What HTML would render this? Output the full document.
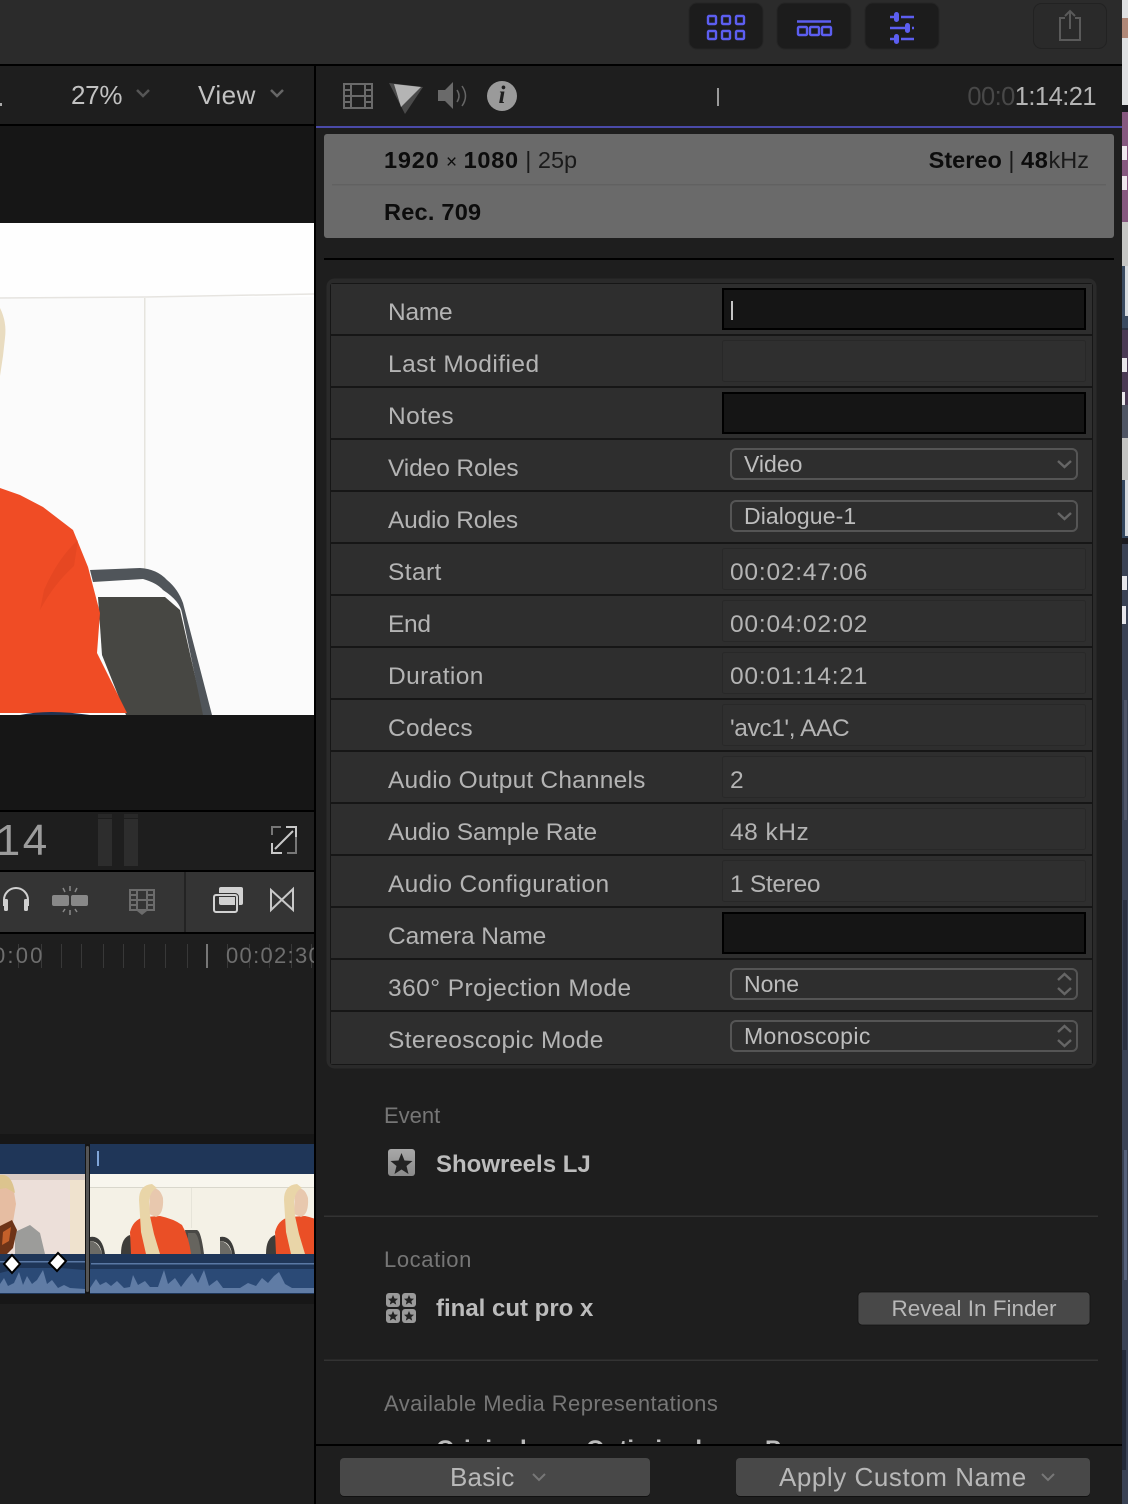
<!DOCTYPE html>
<html><head><meta charset="utf-8"><title>Final Cut Pro Inspector</title>
<style>
html,body{margin:0;padding:0;background:#1e1e1e}
#p{position:relative;width:1128px;height:1504px;overflow:hidden;background:#1e1e1e;font-family:"Liberation Sans",sans-serif}
svg.g{position:absolute;left:0;top:0}
.t{position:absolute;white-space:nowrap;color:#b4b4b4;font-size:24.5px;line-height:30px}
.l{left:388px}
.v{left:730px}
.d{left:744px;font-size:23px;color:#bdbdbd}
.b{font-weight:bold;color:#0c0c0c;font-size:23.5px}
.h{left:384px;font-size:22px;color:#767676}
.n{font-weight:bold;color:#bcbcbc;font-size:24px}
</style></head><body><div id="p">
<svg class="g" width="1128" height="1504" viewBox="0 0 1128 1504">
<defs>
<linearGradient id="star" x1="0" y1="0" x2="0" y2="1"><stop offset="0" stop-color="#a8a8a8"/><stop offset="1" stop-color="#8a8a8a"/></linearGradient>
<clipPath id="vid"><rect x="0" y="223" width="314" height="492"/></clipPath>
<clipPath id="c2"><rect x="90" y="1174" width="224" height="80"/></clipPath>
<clipPath id="c1"><rect x="0" y="1174" width="85" height="80"/></clipPath>
<g id="frame">
<rect x="90" y="1174" width="130" height="80" fill="#f4f1e6"/>
<rect x="90" y="1174" width="130" height="13" fill="#f8f6ee"/>
<rect x="90" y="1187" width="130" height="1" fill="#d9d7cc"/>
<path d="M90 1237q12-2 15 17h-3q-2-13-12-13z" fill="#3c3c3a"/><path d="M90 1241q9 1 12 13H90z" fill="#6c6b66"/>
</g>
<g id="woman">
<rect x="191" y="1188" width="1" height="40" fill="#e6e4d9"/>
<path d="M121 1254q0-16 9-19l4 19z" fill="#3e3d3a"/>
<path d="M185 1230h12q4 1 7 24h-16z" fill="#4a4946"/><path d="M188 1233h7q4 3 6 21h-13z" fill="#66645e"/>
<path d="M130 1232q3-12 14-15l16-1q14 3 22 9 7 12 9 29h-60z" fill="#ea4f26"/>
<path d="M150 1190q9-5 13 8 1 16-7 19l-7-3z" fill="#e8c8ae"/>
<path d="M139 1200q0-15 13-16l5 4q-7 3-8 14l1 14 4 18 6 20h-14l-5-22z" fill="#e9d5a8"/>
</g>
</defs>

<!-- desktop strip -->
<rect x="1122" y="0" width="6" height="1504" fill="#2c3344"/>
<rect x="1122" y="0" width="6" height="108" fill="#dfe0e2"/><rect x="1122" y="18" width="6" height="20" fill="#b08878"/><rect x="1122" y="105" width="6" height="7" fill="#1b1b20"/>
<rect x="1122" y="112" width="6" height="110" fill="#86587f"/><rect x="1122" y="146" width="5" height="14" fill="#f0e8ee"/><rect x="1122" y="176" width="5" height="14" fill="#efe6ec"/>
<rect x="1122" y="222" width="6" height="106" fill="#3a4a60"/><rect x="1122" y="222" width="6" height="44" fill="#c6c6c4"/><rect x="1125" y="266" width="3" height="50" fill="#d6dade"/>
<rect x="1122" y="330" width="6" height="108" fill="#4a3a54"/><rect x="1122" y="358" width="5" height="14" fill="#e8e6ea"/><rect x="1122" y="392" width="3" height="14" fill="#e8e6ea"/><rect x="1122" y="405" width="6" height="33" fill="#4f5564"/>
<rect x="1122" y="438" width="6" height="106" fill="#33465e"/><rect x="1122" y="438" width="6" height="42" fill="#c4c4c2"/><rect x="1125" y="480" width="3" height="56" fill="#d4d8dc"/><rect x="1122" y="538" width="6" height="6" fill="#1b1b20"/>
<rect x="1122" y="544" width="6" height="960" fill="#3a4254"/><rect x="1122" y="576" width="5" height="14" fill="#e6e6ea"/><rect x="1122" y="606" width="4" height="18" fill="#e6e6ea"/>
<rect x="1124" y="700" width="3" height="120" fill="#4f5568"/><rect x="1123" y="900" width="4" height="150" fill="#2a3040"/><rect x="1124" y="1150" width="3" height="130" fill="#55607a"/><rect x="1122" y="1350" width="4" height="120" fill="#232938"/>

<!-- top bar -->
<rect x="0" y="0" width="1122" height="64" fill="#2b2b2b"/>
<rect x="0" y="64" width="1122" height="2" fill="#000"/>
<rect x="689" y="3" width="74" height="46" rx="8" fill="#1c1c1c" stroke="#252525"/>
<rect x="777" y="3" width="74" height="46" rx="8" fill="#1c1c1c" stroke="#252525"/>
<rect x="865" y="3" width="74" height="46" rx="8" fill="#1c1c1c" stroke="#252525"/>
<rect x="1033.500" y="3.500" width="73" height="45" rx="8" fill="#2a2a2a" stroke="#222"/>
<g fill="none" stroke="#5c5ef0" stroke-width="2.400">
<rect x="708" y="16" width="8" height="8" rx="1"/><rect x="722" y="16" width="8" height="8" rx="1"/><rect x="736" y="16" width="8" height="8" rx="1"/>
<rect x="708" y="31" width="8" height="8" rx="1"/><rect x="722" y="31" width="8" height="8" rx="1"/><rect x="736" y="31" width="8" height="8" rx="1"/>
<path d="M797 21.500h34"/>
<rect x="798" y="27" width="9" height="8" rx="1"/><rect x="810" y="27" width="9" height="8" rx="1"/><rect x="822" y="27" width="9" height="8" rx="1"/>
<path d="M890 17h4M901 17h13M890 28h18M912 28h2M890 39h4M901 39h13"/>
</g>
<g fill="#5c5ef0"><rect x="894" y="12" width="5" height="10" rx="2.500"/><rect x="905" y="23" width="5" height="10" rx="2.500"/><rect x="894" y="34" width="5" height="10" rx="2.500"/></g>
<path d="M1065 18h-5v22h20V18h-5M1070 29V12M1065 16l5-5 5 5" fill="none" stroke="#5a5a5a" stroke-width="2"/>

<!-- viewer column -->
<rect x="0" y="66" width="314" height="58" fill="#1e1e1e"/>
<rect x="0" y="124" width="314" height="2" fill="#000"/>
<rect x="0" y="126" width="314" height="684" fill="#161616"/>
<rect x="314" y="64" width="2" height="1440" fill="#000"/>
<rect x="0" y="103" width="2" height="3" fill="#aaa"/>
<path d="M137 90l6 6 6-6" fill="none" stroke="#555" stroke-width="2.500"/>
<path d="M271 90l6 6 6-6" fill="none" stroke="#666" stroke-width="2.500"/>

<!-- video -->
<g clip-path="url(#vid)">
<rect x="0" y="223" width="314" height="492" fill="#fefefe"/>
<rect x="0" y="297" width="314" height="420" fill="#fbfbfb"/>
<path d="M0 298L145 297 314 294" stroke="#e6e4e0" stroke-width="1.500" fill="none"/>
<rect x="144" y="298" width="1.500" height="272" fill="#e6e4de"/>
<path d="M0 308q7 14 5 30l-2 18-3 20z" fill="#e9dcc0"/>
<path d="M98 597h67l15 13 24 105H126l-24-60z" fill="#474743"/>
<path d="M90 570l50-2q17 1 27 12 11 9 16 23l29 112h-9l-21-102q-2-12-19-23-6-7-20-11l-50 3z" fill="#50555a"/>
<path d="M0 488l20 7 23 12 30 23 15 37 12 46-3 40 30 60H0z" fill="#f04c25"/>
<path d="M78 540q-20 18-34 50l-4 20q14-26 34-44z" fill="#da421f" opacity=".45"/>
<path d="M20 715q28-6 70 0z" fill="#1f3250"/>
</g>
<rect x="0" y="810" width="314" height="2" fill="#000"/>

<!-- lower viewer bar -->
<rect x="0" y="812" width="314" height="58" fill="#1e1e1e"/>
<g fill="#2d2d2d"><rect x="98" y="819" width="14" height="47"/><rect x="124" y="819" width="14" height="47"/></g>
<g fill="#282828"><rect x="98" y="814" width="14" height="4"/><rect x="124" y="814" width="14" height="4"/></g>
<path d="M288 827h8v26h-9M279 853h-7v-8M272 835v-8h9" fill="none" stroke="#777" stroke-width="2"/>
<path d="M275 849l18-18M286 827h10v10M272 843v10h10" fill="none" stroke="#c8c8c8" stroke-width="2"/>

<!-- tools bar -->
<rect x="0" y="870" width="314" height="2" fill="#000"/>
<rect x="0" y="872" width="314" height="60" fill="#343434"/>
<rect x="0" y="932" width="314" height="2" fill="#000"/>
<rect x="184" y="872" width="2" height="60" fill="#232323"/>
<path d="M4 906v-6a12 12 0 0 1 24 0v6" fill="none" stroke="#d0d0d0" stroke-width="2"/>
<rect x="4" y="899" width="4" height="12" rx="1.500" fill="#d0d0d0"/><rect x="24" y="899" width="4" height="12" rx="1.500" fill="#d0d0d0"/>
<rect x="52" y="895" width="17" height="11" rx="2" fill="#888"/><rect x="71" y="895" width="17" height="11" rx="2" fill="#888"/>
<path d="M70 886v5M70 910v5M63 888l2 4M75 892l2-4M63 912l2-3M75 909l2 3" stroke="#888" stroke-width="1.500"/>
<g fill="none" stroke="#6c6c6c" stroke-width="2"><rect x="130" y="890" width="24" height="20"/><path d="M137 890v20M147 890v20M137 900h10M130 895h7M130 900h7M130 905h7M147 895h7M147 900h7M147 905h7"/></g>
<path d="M137 911h10l-5 4z" fill="#6c6c6c"/>
<rect x="219" y="887" width="24" height="18" rx="2" fill="#d2d2d2"/>
<rect x="214" y="895" width="23" height="17" rx="2" fill="none" stroke="#343434" stroke-width="4"/>
<rect x="214" y="895" width="23" height="17" rx="2" fill="none" stroke="#d2d2d2" stroke-width="2"/>
<path d="M271 890l22 20v-21l-22 21z" fill="none" stroke="#c8c8c8" stroke-width="2"/>

<!-- ruler -->
<rect x="0" y="934" width="314" height="200" fill="#1e1e1e"/>
<g fill="#383838">
<rect x="18" y="944" width="1" height="24"/><rect x="41" y="944" width="1" height="24"/><rect x="61" y="944" width="1" height="24"/><rect x="81" y="944" width="1" height="24"/><rect x="103" y="944" width="1" height="24"/><rect x="123" y="944" width="1" height="24"/><rect x="144" y="944" width="1" height="24"/><rect x="165" y="944" width="1" height="24"/><rect x="187" y="944" width="1" height="24"/><rect x="227" y="944" width="1" height="24"/><rect x="249" y="944" width="1" height="24"/><rect x="269" y="944" width="1" height="24"/><rect x="291" y="944" width="1" height="24"/><rect x="311" y="944" width="1" height="24"/>
</g>
<rect x="206" y="944" width="2" height="24" fill="#777"/>

<!-- timeline -->
<rect x="0" y="1134" width="314" height="10" fill="#171717"/>
<rect x="0" y="1294" width="314" height="10" fill="#171717"/>
<rect x="0" y="1144" width="314" height="150" fill="#141414"/>
<rect x="0" y="1144" width="85" height="150" fill="#1f3658"/>
<rect x="90" y="1144" width="224" height="150" fill="#1f3658"/>
<rect x="86" y="1146" width="3" height="146" rx="1.500" fill="#555"/>
<rect x="97" y="1151" width="2" height="15" fill="#7fa5d8"/>
<g clip-path="url(#c1)">
<rect x="0" y="1174" width="85" height="80" fill="#ecdfd9"/>
<rect x="0" y="1174" width="85" height="6" fill="#d8cbc4"/>
<rect x="70" y="1180" width="15" height="74" fill="#efe2ce"/>
<path d="M15 1232l15-7 10 8 5 21H15z" fill="#9c9c9a"/>
<path d="M0 1180q12-6 14 12l2 12-3 18-13 5z" fill="#e6bda2"/>
<path d="M0 1175q12-2 15 18l-9-5-6 1z" fill="#dcc48e"/>
<path d="M0 1226l12-6 5 10-4 18-6 6H0z" fill="#6e3418"/>
<path d="M3 1232l8-5-2 14-7 4z" fill="#c4602a"/>
</g>
<g clip-path="url(#c2)"><use href="#frame"/><use href="#woman"/><use href="#frame" x="130"/><use href="#woman" x="145"/></g>
<g fill="#2b4a76">
<path d="M0 1293v-20l20-5h40l25 2v23z"/>
<path d="M90 1293v-24h224v24z"/>
</g>
<rect x="0" y="1261" width="85" height="1.500" fill="#5a78a4"/>
<rect x="91" y="1263" width="223" height="1.500" fill="#5a78a4"/>
<path fill="#607ca5" d="M0 1293V1284L4 1278 8 1286 14 1283 19 1272 23 1285 27 1276 32 1284 37 1280 43 1270 47 1284 52 1280 58 1288 64 1285 70 1288 85 1289V1293Z"/>
<path fill="#607ca5" d="M90 1293V1288L96 1279 100 1285 106 1282 111 1286 117 1281 124 1288 130 1287 133 1275 138 1285 145 1281 150 1287 158 1287 164 1270 168 1284 175 1278 181 1287 187 1279 192 1273 198 1283 204 1270 209 1286 217 1280 223 1288 232 1288 240 1288 248 1283 256 1286 262 1278 268 1283 274 1276 279 1272 285 1284 292 1288 314 1288V1293Z"/>
<g stroke="#000" stroke-width="2" fill="#fff">
<path d="M12 1255l8 9-8 9-8-9z"/>
<path d="M58 1253l8 8-9 10-8-8z"/>
</g>

<!-- inspector tabs -->
<g fill="none" stroke="#6a6a6a" stroke-width="2"><rect x="344" y="84" width="28" height="24"/><path d="M351 84v24M365 84v24M351 96h14M344 90h7M344 96h7M344 102h7M365 90h7M365 96h7M365 102h7"/></g>
<path d="M389 83l34 4-18 27z" fill="#4a4a4a"/><path d="M394 84l27 3-20 20z" fill="#b4b4b4"/>
<path d="M438 90h7l8-8v27l-8-8h-7z" fill="#6a6a6a"/>
<path d="M457 90q4 6 0 12M462 86q7 10 0 20" fill="none" stroke="#666" stroke-width="1.500"/>
<circle cx="502" cy="96" r="15" fill="#9a9a9a"/>
<rect x="717" y="88" width="2" height="18" fill="#9a9a9a"/>
<rect x="316" y="126" width="806" height="2" fill="#4a4aa8"/>

<!-- info block -->
<rect x="324" y="134" width="790" height="104" rx="3" fill="#6a6a6a"/>
<rect x="332" y="184" width="774" height="1.500" fill="#616161"/>
<rect x="324" y="258" width="790" height="2" fill="#000"/>

<!-- property table -->
<rect x="326.500" y="278.500" width="770" height="790" rx="8" fill="#2a2a2a"/>
<rect x="330" y="283" width="763" height="782" rx="3" fill="#161616"/>
<g fill="#2e2e2e">
<rect x="331" y="284" width="761" height="50"/><rect x="331" y="336" width="761" height="50"/><rect x="331" y="388" width="761" height="50"/><rect x="331" y="440" width="761" height="50"/><rect x="331" y="492" width="761" height="50"/><rect x="331" y="544" width="761" height="50"/><rect x="331" y="596" width="761" height="50"/><rect x="331" y="648" width="761" height="50"/><rect x="331" y="700" width="761" height="50"/><rect x="331" y="752" width="761" height="50"/><rect x="331" y="804" width="761" height="50"/><rect x="331" y="856" width="761" height="50"/><rect x="331" y="908" width="761" height="50"/><rect x="331" y="960" width="761" height="50"/><rect x="331" y="1012" width="761" height="52"/>
</g>
<g fill="#151515" stroke="#000" stroke-width="2">
<rect x="723" y="289" width="362" height="40"/><rect x="723" y="393" width="362" height="40"/><rect x="723" y="913" width="362" height="40"/>
</g>
<g fill="#2f2f2f" stroke="#282828" stroke-width="1">
<rect x="722.500" y="340.500" width="363" height="41" rx="2"/><rect x="722.500" y="548.500" width="363" height="41" rx="2"/><rect x="722.500" y="600.500" width="363" height="41" rx="2"/><rect x="722.500" y="652.500" width="363" height="41" rx="2"/><rect x="722.500" y="704.500" width="363" height="41" rx="2"/><rect x="722.500" y="756.500" width="363" height="41" rx="2"/><rect x="722.500" y="808.500" width="363" height="41" rx="2"/><rect x="722.500" y="860.500" width="363" height="41" rx="2"/>
</g>
<rect x="731" y="301" width="2" height="19" fill="#c4c4c4"/>
<g fill="none" stroke="#555" stroke-width="2">
<rect x="731" y="449" width="346" height="30" rx="5"/><rect x="731" y="501" width="346" height="30" rx="5"/><rect x="731" y="969" width="346" height="30" rx="5"/><rect x="731" y="1021" width="346" height="30" rx="5"/>
</g>
<g fill="none" stroke="#666" stroke-width="2.400">
<path d="M1058 461l6.500 6 6.500-6M1058 513l6.500 6 6.500-6"/>
<path d="M1058 980l6.500-6 6.500 6M1058 988l6.500 6 6.500-6M1058 1032l6.500-6 6.500 6M1058 1040l6.500 6 6.500-6"/>
</g>

<!-- separators -->
<rect x="324" y="1215.500" width="774" height="1.500" fill="#333"/>
<rect x="324" y="1359.500" width="774" height="1.500" fill="#333"/>

<!-- event icons -->
<rect x="388" y="1149" width="27" height="27" rx="3" fill="url(#star)"/>
<path d="M401.500 1153l3 7.500 8 .5-6 5 2 8-7-4.500-7 4.500 2-8-6-5 8-.5z" fill="#232323"/>
<g fill="#9a9a9a"><rect x="386" y="1293" width="14" height="14" rx="3"/><rect x="402" y="1293" width="14" height="14" rx="3"/><rect x="386" y="1309" width="14" height="14" rx="3"/><rect x="402" y="1309" width="14" height="14" rx="3"/></g>
<g fill="#222"><path d="M393 1295l1.500 3.500 3.500.3-2.700 2.300.9 3.500-3.200-2-3.200 2 .9-3.500-2.700-2.300 3.500-.3z"/><path d="M409 1295l1.500 3.500 3.500.3-2.700 2.300.9 3.500-3.200-2-3.200 2 .9-3.500-2.700-2.300 3.500-.3z"/><path d="M393 1311l1.500 3.500 3.500.3-2.700 2.300.9 3.500-3.200-2-3.200 2 .9-3.500-2.700-2.300 3.500-.3z"/><path d="M409 1311l1.500 3.500 3.500.3-2.700 2.300.9 3.500-3.200-2-3.200 2 .9-3.500-2.700-2.300 3.500-.3z"/></g>
<rect x="858" y="1292" width="232" height="33" rx="4" fill="#484848" stroke="#151515" stroke-width=".8"/>
</svg>

<!-- text -->
<div class="t" style="left:71px;top:80px;font-size:26px;color:#c2c2c2;letter-spacing:-.3px">27%</div>
<div class="t" style="left:198px;top:80px;font-size:26px;color:#c2c2c2;letter-spacing:.5px">View</div>
<div class="t" style="left:-19px;top:818px;font-size:44px;line-height:46px;color:#9c9c9c;letter-spacing:2.500px">:14</div>
<div style="position:absolute;left:0;top:940px;width:314px;height:30px;overflow:hidden">
<div class="t" style="left:-7px;top:1px;font-size:22px;color:#6e6e6e;letter-spacing:2.200px;font-weight:normal">0:00</div>
<div class="t" style="left:226px;top:1px;font-size:22px;color:#6e6e6e;letter-spacing:1.300px">00:02:30</div>
</div>
<div class="t" style="left:490px;top:81px;width:24px;text-align:center;font:italic bold 25px/30px 'Liberation Serif',serif;color:#1e1e1e">i</div>
<div class="t" style="right:32px;top:82px;font-size:25.500px;color:#b4b4b4;letter-spacing:-.55px"><span style="color:#484848">00:0</span>1:14:21</div>

<div class="t b" style="left:384px;top:145px"><span style="letter-spacing:.8px">1920</span> <span style="font-weight:normal;font-size:19px">×</span> <span style="letter-spacing:.7px">1080</span> <span style="font-weight:normal;color:#1a1a1a">| 25p</span></div>
<div class="t b" style="right:39px;top:145px">Stereo <span style="font-weight:normal;color:#1a1a1a">|</span> <span style="letter-spacing:.7px">48</span><span style="font-weight:normal;color:#1a1a1a">kHz</span></div>
<div class="t b" style="left:384px;top:197px;letter-spacing:.25px">Rec. 709</div>

<div class="t l" style="top:298px;letter-spacing:-.25px">Name</div>
<div class="t l" style="top:350px;letter-spacing:.45px">Last Modified</div>
<div class="t l" style="top:402px;letter-spacing:.4px">Notes</div>
<div class="t l" style="top:454px;letter-spacing:-.1px">Video Roles</div>
<div class="t l" style="top:506px;letter-spacing:-.2px">Audio Roles</div>
<div class="t l" style="top:558px;letter-spacing:.4px">Start</div>
<div class="t l" style="top:610px;letter-spacing:-.3px">End</div>
<div class="t l" style="top:662px;letter-spacing:.4px">Duration</div>
<div class="t l" style="top:714px;letter-spacing:.3px">Codecs</div>
<div class="t l" style="top:766px;letter-spacing:.2px">Audio Output Channels</div>
<div class="t l" style="top:818px;letter-spacing:-.12px">Audio Sample Rate</div>
<div class="t l" style="top:870px;letter-spacing:.33px">Audio Configuration</div>
<div class="t l" style="top:922px;letter-spacing:-.1px">Camera Name</div>
<div class="t l" style="top:974px;letter-spacing:.45px">360° Projection Mode</div>
<div class="t l" style="top:1026px;letter-spacing:.35px">Stereoscopic Mode</div>

<div class="t d" style="top:449px">Video</div>
<div class="t d" style="top:501px;letter-spacing:.1px">Dialogue-1</div>
<div class="t d" style="top:969px">None</div>
<div class="t d" style="top:1021px;letter-spacing:.4px">Monoscopic</div>
<div class="t v" style="top:558px;letter-spacing:.8px">00:02:47:06</div>
<div class="t v" style="top:610px;letter-spacing:.8px">00:04:02:02</div>
<div class="t v" style="top:662px;letter-spacing:.8px">00:01:14:21</div>
<div class="t v" style="top:714px;letter-spacing:-.4px">'avc1', AAC</div>
<div class="t v" style="top:766px">2</div>
<div class="t v" style="top:818px;letter-spacing:.5px">48 kHz</div>
<div class="t v" style="top:870px;letter-spacing:-.3px">1 Stereo</div>

<div class="t h" style="top:1101px">Event</div>
<div class="t n" style="left:436px;top:1150px">Showreels LJ</div>
<div class="t h" style="top:1245px;letter-spacing:.6px">Location</div>
<div class="t n" style="left:436px;top:1294px">final cut pro x</div>
<div class="t" style="left:858px;top:1294px;width:232px;text-align:center;font-size:22.500px;color:#b8b8b8">Reveal In Finder</div>
<div class="t h" style="top:1389px;letter-spacing:.42px">Available Media Representations</div>
<div style="position:absolute;left:316px;top:1420px;width:806px;height:24px;overflow:hidden">
<div class="t n" style="left:120px;top:15px;font-size:24px">Original</div>
<div class="t n" style="left:270px;top:15px;font-size:24px">Optimized</div>
<div class="t n" style="left:449px;top:15px;font-size:24px">Proxy</div>
</div>

<!-- bottom bar -->
<div style="position:absolute;left:316px;top:1444px;width:806px;height:60px;background:#1e1e1e;border-top:2px solid #000;box-sizing:border-box"></div>
<div style="position:absolute;left:340px;top:1458px;width:310px;height:38px;background:#484848;border-radius:4px;box-shadow:0 1px 0 #111"></div>
<div style="position:absolute;left:736px;top:1458px;width:354px;height:38px;background:#484848;border-radius:4px;box-shadow:0 1px 0 #111"></div>
<div class="t" style="left:450px;top:1462px;font-size:26px;color:#b8b8b8;letter-spacing:.2px">Basic</div>
<div class="t" style="left:779px;top:1462px;font-size:26px;color:#b8b8b8;letter-spacing:.55px">Apply Custom Name</div>
<svg class="g" width="1128" height="1504" viewBox="0 0 1128 1504" style="pointer-events:none">
<path d="M533 1474l6 6 6-6M1042 1474l6 6 6-6" fill="none" stroke="#777" stroke-width="2"/>
</svg>
</div></body></html>
